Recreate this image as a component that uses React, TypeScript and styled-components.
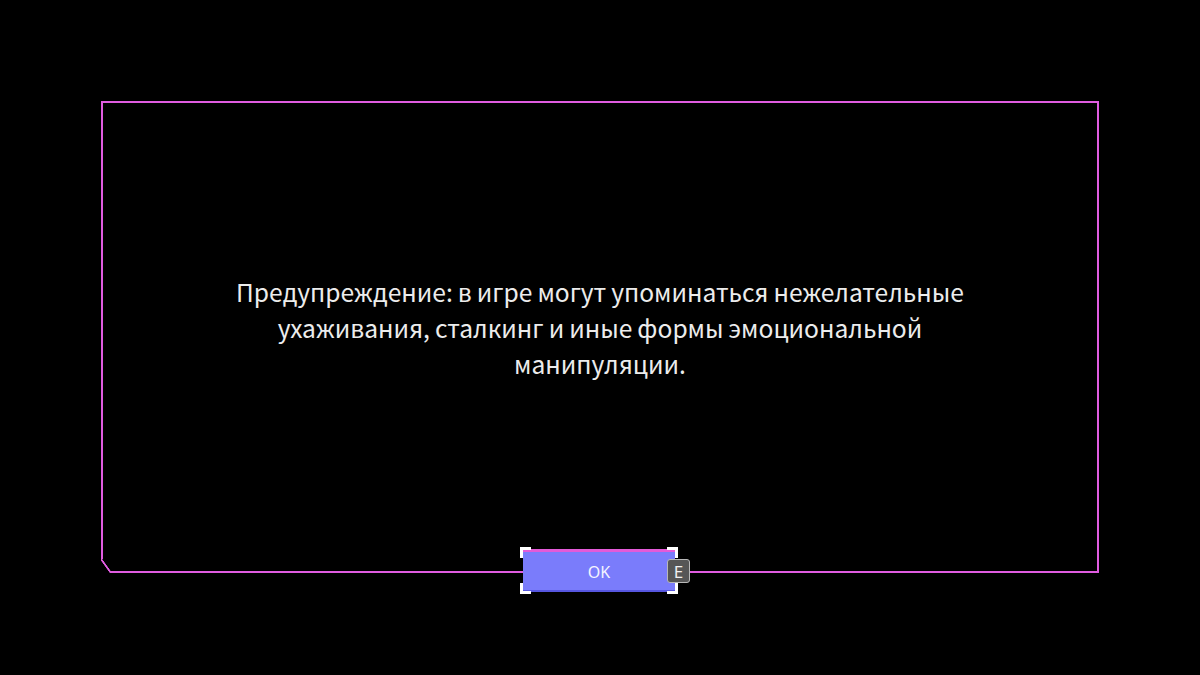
import styled, { createGlobalStyle } from 'styled-components';

const GlobalStyle = createGlobalStyle`
  html, body {
    margin: 0;
    padding: 0;
    background: #000;
  }
`;

const Screen = styled.div`
  width: 1200px;
  height: 675px;
  background: #000;
  padding: 101px 101px 0 101px;
  box-sizing: border-box;
  font-family: 'Noto Sans CJK SC', 'Noto Sans', sans-serif;
`;

const Frame = styled.div`
  position: relative;
  height: 472px;
  border: 2px solid #e05ce0;
  box-sizing: border-box;
  display: flex;
  align-items: center;
  justify-content: center;
  padding-bottom: 21px;

  /* chamfered bottom-left corner */
  &::after {
    content: '';
    position: absolute;
    left: -2px;
    bottom: -2px;
    width: 10px;
    height: 14px;
    background: linear-gradient(
      to top right,
      #000 calc(50% - 1.2px),
      #e05ce0 calc(50% - 0.6px),
      #e05ce0 calc(50% + 0.6px),
      #000 calc(50% + 1.2px)
    );
  }
`;

const Message = styled.p`
  margin: 0;
  max-width: 780px;
  color: #ececec;
  font-size: 24.6px;
  line-height: 36px;
  text-align: center;
  word-spacing: -0.5px;
`;

const Footer = styled.div`
  position: absolute;
  left: 0;
  right: 0;
  bottom: -21px;
  display: flex;
  justify-content: center;
`;

const OkButton = styled.button`
  position: relative;
  width: 152px;
  height: 43px;
  margin-left: -2px;
  padding: 2px 0 0;
  border: none;
  border-top: 3px solid #e35ad8;
  border-bottom: 2px solid #5656e0;
  background: #7a7cfb;
  color: #f4f4ff;
  font-family: 'Noto Sans', 'Open Sans', sans-serif;
  font-size: 16px;
  cursor: pointer;
`;

const Corner = styled.span<{ $v: 'top' | 'bottom'; $h: 'left' | 'right' }>`
  position: absolute;
  width: 8px;
  height: 8px;
  ${({ $v }) => ($v === 'top' ? 'top: -5px;' : 'bottom: -4px;')}
  ${({ $h }) => ($h === 'left' ? 'left: -3px;' : 'right: -3px;')}
  border-color: #ffffff;
  border-style: solid;
  border-width: ${({ $v, $h }) =>
    `${$v === 'top' ? 3 : 0}px ${$h === 'right' ? 3 : 0}px ${$v === 'bottom' ? 3 : 0}px ${
      $h === 'left' ? 3 : 0
    }px`};
`;

const KeyHint = styled.span`
  position: absolute;
  right: -15px;
  top: 7px;
  width: 21px;
  height: 22px;
  display: flex;
  align-items: center;
  justify-content: center;
  background: #565656;
  border: 1px solid #b8b8b8;
  border-radius: 3px;
  color: #f0f0f0;
  font-family: 'Noto Sans', 'Open Sans', sans-serif;
  font-size: 17px;
  line-height: 1;
`;

const App = () => {
  return (
    <Screen>
      <GlobalStyle />
      <Frame>
        <Message>
          Предупреждение: в игре могут упоминаться нежелательные ухаживания, сталкинг и иные формы
          эмоциональной манипуляции.
        </Message>
        <Footer>
          <OkButton>
            OK
            <Corner $v="top" $h="left" />
            <Corner $v="top" $h="right" />
            <Corner $v="bottom" $h="left" />
            <Corner $v="bottom" $h="right" />
            <KeyHint>E</KeyHint>
          </OkButton>
        </Footer>
      </Frame>
    </Screen>
  );
};

export default App;
